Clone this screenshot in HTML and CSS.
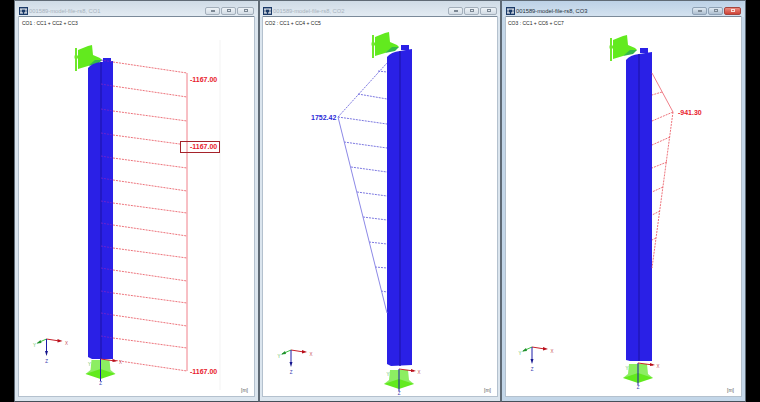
FILE: index.html
```html
<!DOCTYPE html>
<html lang="en">
<head>
    <meta charset="UTF-8">
    <title>001589-model-file-rs8</title>
    <link rel="stylesheet" href="styles.css">
</head>
<body>
    <div class="desktop">
        <!-- CO1 -->
        <div class="window">
            <div class="titlebar">
                <svg class="app-icon" viewBox="0 0 9 8"><use href="#logo"/></svg>
                <span class="title">001589-model-file-rs8, CO1</span>
                <div class="controls">
                    <span class="btn btn-min"><i></i></span>
                    <span class="btn btn-max"><i></i></span>
                    <span class="btn btn-close"><i></i></span>
                </div>
            </div>
            <svg class="view" viewBox="19 17 235 379">
                <defs>
                    <g id="logo">
                        <rect width="9" height="8" fill="#1b3a68"/>
                        <path d="M1 2H8M2 2V6M7 2V6M1 6H4M5 6H8" stroke="#fff" stroke-width="1" fill="none"/>
                    </g>
                    <g id="top-support">
                        <path d="M76 48V71" stroke="#6fe82c" stroke-width="2"/>
                        <path d="M74.5 57H79" stroke="#6fe82c" stroke-width="3"/>
                        <polygon class="green" points="78,50 88,46 92,45 93,55 100,58 102,60 93,63 88,66 78,69"/>
                        <polygon class="green-dark" points="88,66 95,60 102,60 98,64"/>
                    </g>
                    <g id="base-support">
                        <polygon class="green-light" points="-9,-14 9,-14 10,-4 15,0 -15,0 -10,-4"/>
                        <polygon class="green" points="-15,0 0,-5 15,0 0,5"/>
                        <path class="axis-x" d="M0 -15L15 -13"/>
                        <polygon class="head-x" points="12,-15 17,-13 12,-12"/>
                        <path class="axis-z" d="M0 -15V7"/>
                        <text class="axis-label label-x" x="20" y="-10.5">X</text>
                        <text class="axis-label label-y" x="-11" y="-8.5">Y</text>
                        <text class="axis-label label-z" x="0" y="11">Z</text>
                    </g>
                    <g id="triad">
                        <path class="axis-x" d="M0 0L13 2"/>
                        <polygon class="head-x" points="11,0 16,2 11,3.5"/>
                        <path class="axis-y" d="M0 0L-9 4"/>
                        <polygon class="head-y" points="-6,1 -10,4.5 -5,4"/>
                        <path class="axis-z" d="M0 0V13"/>
                        <polygon class="head-z" points="-1.5,12 1.5,12 0,17"/>
                        <text class="axis-label label-x" x="20" y="6">X</text>
                        <text class="axis-label label-y" x="-12" y="8">Y</text>
                        <text class="axis-label label-z" x="0" y="24">Z</text>
                    </g>
                </defs>
                <text class="caption" x="22" y="25">CO1 : CC1 + CC2 + CC3</text>
                <path class="grid-line" d="M220 40V390"/>
                <use href="#top-support"/>
                <path class="face" d="M88 68Q92 63 101 62L113 61V359H92L88 357Z"/>
                <rect class="face" x="103" y="58" width="8" height="4"/>
                <path class="seam" d="M101 62V359"/>
                <path class="rows-in" d="M101 60L113 62M101 84L113 86M101 109L113 111M101 133L113 135M101 156L113 158M101 178L113 180M101 201L113 203M101 223L113 225M101 246L113 248M101 268L113 270M101 291L113 293M101 313L113 315M101 336L113 338"/>
                <path class="rows-red" d="M113 62L187 73M113 86L187 97M113 111L187 121M113 135L187 145M113 158L187 168M113 180L187 191M113 203L187 213M113 225L187 236M113 248L187 258M113 270L187 281M113 293L187 303M113 315L187 326M113 338L187 348M113 360L187 371"/>
                <path class="edge-red" d="M187 73V371"/>
                <use href="#base-support" x="100.5" y="374"/>
                <use href="#triad" x="46.5" y="339"/>
                <text class="value value-red" x="190" y="81.5">-1167.00</text>
                <rect class="value-box" x="180.5" y="141.5" width="39" height="11"/>
                <path class="edge-red" d="M187 142V152"/>
                <text class="value value-red" x="190" y="148.5">-1167.00</text>
                <text class="value value-red" x="190" y="373.5">-1167.00</text>
                <text class="unit" x="241" y="392">[m]</text>
            </svg>
        </div>

        <!-- CO2 -->
        <div class="window window-mid">
            <div class="titlebar">
                <svg class="app-icon" viewBox="0 0 9 8"><use href="#logo"/></svg>
                <span class="title">001589-model-file-rs8, CO2</span>
                <div class="controls">
                    <span class="btn btn-min"><i></i></span>
                    <span class="btn btn-max"><i></i></span>
                    <span class="btn btn-close"><i></i></span>
                </div>
            </div>
            <svg class="view" viewBox="263 17 234 379">
                <text class="caption" x="265" y="25">CO2 : CC1 + CC4 + CC5</text>
                <use href="#top-support" x="297" y="-13"/>
                <path class="face" d="M387 57Q391 52 400 51L412 49V365L391 366L387 364Z"/>
                <rect class="face" x="401" y="45" width="8" height="5"/>
                <path class="seam" d="M400 51V366"/>
                <path class="rows-blue" d="M338 117L387 63M378 71L387 72M358 94L387 99M338 117L387 124M344 142L387 148M351 167L387 172M357 192L387 196M363 217L387 220M369 242L387 244M375 267L387 268M381 291L387 292"/>
                <path class="edge-blue" d="M338 117L387 313"/>
                <use href="#base-support" x="399" y="384"/>
                <use href="#triad" x="291" y="350"/>
                <text class="value value-blue" x="311" y="119.5">1752.42</text>
                <text class="unit" x="484" y="392">[m]</text>
            </svg>
        </div>

        <!-- CO3 -->
        <div class="window window-active">
            <div class="titlebar">
                <svg class="app-icon" viewBox="0 0 9 8"><use href="#logo"/></svg>
                <span class="title">001589-model-file-rs8, CO3</span>
                <div class="controls">
                    <span class="btn btn-min"><i></i></span>
                    <span class="btn btn-max"><i></i></span>
                    <span class="btn btn-close"><i></i></span>
                </div>
            </div>
            <svg class="view" viewBox="506 17 235 379">
                <text class="caption" x="508" y="25">CO3 : CC1 + CC6 + CC7</text>
                <use href="#top-support" x="535" y="-10"/>
                <path class="face" d="M626 60Q630 55 639 54L652 52V361H630L626 360Z"/>
                <rect class="face" x="640" y="48" width="8" height="5"/>
                <path class="seam" d="M639 54V361"/>
                <path class="rows-red" d="M673 112L652 121M662 92L652 95M670 137L652 145M667 162L652 168M663 187L652 192M660 211L652 215M656 238L652 240M673 112L652 268"/>
                <path class="edge-red" d="M652 73L673 112"/>
                <use href="#base-support" x="638" y="378"/>
                <use href="#triad" x="532" y="347"/>
                <text class="value value-red" x="678" y="114.5">-941.30</text>
                <text class="unit" x="727" y="392">[m]</text>
            </svg>
        </div>
    </div>
</body>
</html>
```

FILE: styles.css
```css
*{
    padding: 0;
    margin: 0;
    box-sizing: border-box;
}
body{
    width: 760px;
    height: 402px;
    overflow: hidden;
    background-color: #000;
    font-family: "Liberation Sans", Arial, sans-serif;
}
.desktop{
    display: flex;
    padding-left: 14px;
}
.window{
    display: flex;
    flex-direction: column;
    width: 245px;
    height: 402px;
    padding: 0 4px 4px;
    border: 1px solid #5f6a75;
    border-bottom-color: #46505a;
    background-color: #dbe5ee;
}
.window-mid{
    width: 242px;
    padding: 0 3px 4px;
}
.window-active{
    background-color: #c3d6e8;
}
.titlebar{
    display: flex;
    align-items: center;
    height: 16px;
    padding: 3px 3px 0;
    margin: 0 -3px;
    background: linear-gradient(#cfdbe6, #e4ecf3);
}
.window-active .titlebar{
    background: linear-gradient(#bcd1e6, #d5e3f0);
}
.app-icon{
    width: 9px;
    height: 8px;
    margin-right: 1px;
}
.title{
    font-size: 5.8px;
    color: #a7b2bc;
}
.window-active .title{
    color: #25303a;
}
.controls{
    display: flex;
    gap: 1px;
    margin-left: auto;
}
.btn{
    display: flex;
    align-items: center;
    justify-content: center;
    width: 15px;
    height: 8px;
    border: 1px solid #a3afbb;
    border-radius: 2px;
    background: linear-gradient(#eef3f7, #d3dce5);
}
.btn-close{
    width: 17px;
}
.btn i{
    display: block;
    width: 4px;
    height: 3px;
    border: 1px solid #7c8894;
}
.btn-min i{
    height: 2px;
}
.window-active .btn{
    border-color: #8fa2b6;
    background: linear-gradient(#dfe9f2, #aebfd0);
}
.window-active .btn-close{
    border-color: #a5453d;
    background: linear-gradient(#ea8b7f, #cf4236);
}
.window-active .btn-close i{
    border-color: #f7ded9;
}
.view{
    display: block;
    width: 100%;
    height: 379px;
    background-color: #fff;
    box-shadow: 0 -1px 0 #7b8a99, 0 0 0 1px #b4c1ce;
}
.caption{
    font-size: 5px;
    fill: #222;
}
.unit{
    font-size: 5px;
    fill: #555;
}
.value{
    font-size: 7px;
    font-weight: bold;
}
.value-red{
    fill: #e8202c;
}
.value-blue{
    fill: #2a2ad8;
}
.value-box{
    fill: #fff;
    stroke: #a5232b;
    stroke-width: 1;
}
.face{
    fill: #2a20e6;
}
.seam{
    stroke: #2016b8;
    stroke-width: 1.5;
}
.grid-line{
    stroke: #f3f3f3;
    stroke-width: 1;
}
.rows-red{
    fill: none;
    stroke: #e8505a;
    stroke-width: 0.8;
    stroke-dasharray: 2 1;
}
.rows-in{
    stroke: #7a22c8;
    stroke-width: 0.8;
    stroke-dasharray: 2 1;
}
.edge-red{
    stroke: #f0808a;
    stroke-width: 1;
}
.rows-blue{
    fill: none;
    stroke: #5a56d8;
    stroke-width: 0.8;
    stroke-dasharray: 2 1;
}
.edge-blue{
    stroke: #8c88e6;
    stroke-width: 1;
}
.green{
    fill: #62ea1e;
}
.green-dark{
    fill: #35b84a;
}
.green-light{
    fill: #8cee62;
}
.axis-x{
    stroke: #c8202a;
    stroke-width: 1;
}
.axis-y{
    stroke: #3cc040;
    stroke-width: 1;
}
.axis-z{
    stroke: #1a1aa8;
    stroke-width: 1;
}
.head-x{
    fill: #b8101c;
}
.head-y{
    fill: #1f8f2c;
}
.head-z{
    fill: #14148c;
}
.axis-label{
    font-size: 4.5px;
    text-anchor: middle;
}
.label-x{
    fill: #c8505a;
}
.label-y{
    fill: #60c060;
}
.label-z{
    fill: #3a3ab0;
}
```
